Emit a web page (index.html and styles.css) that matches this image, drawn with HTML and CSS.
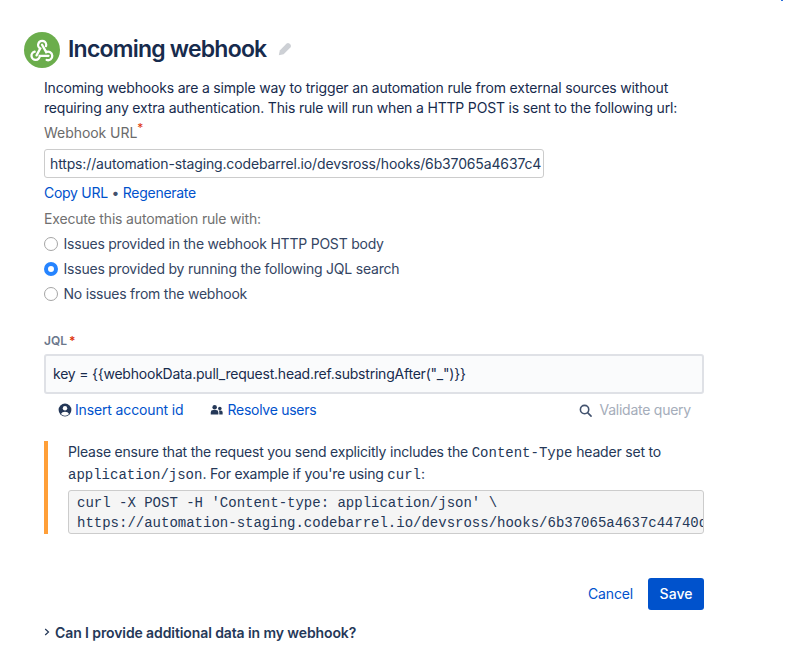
FILE: index.html
```html
<!DOCTYPE html>
<html lang="en">
<head>
<meta charset="utf-8">
<title>Incoming webhook</title>
<link rel="stylesheet" href="styles.css">
</head>
<body>
<span class="corner-mark"></span>
<main class="page">
  <header class="title-row">
    <span class="logo">
      <svg viewBox="0 0 36 36" width="36" height="36">
        <circle cx="18" cy="18" r="18" fill="#6bad4c"/>
        <g transform="translate(1.5 1.3) scale(.92)" fill="none" stroke="#fff" stroke-width="2.500" stroke-linecap="round">
          <path d="M12 24 16 16.500A4.400 4.400 0 1 1 22.300 14"/>
          <path d="M18 12.500 22.500 20.500A4.600 4.600 0 1 1 23 29"/>
          <path d="M25 24.500H15.500A4.500 4.500 0 1 1 10 20"/>
        </g>
      </svg>
    </span>
    <h1 class="title">Incoming webhook</h1>
    <svg class="pencil" viewBox="0 0 14 14" width="14" height="14">
      <path d="M.8 13.200 1.800 8.400 8.600 1.600a2 2 0 0 1 2.800 0l1 1a2 2 0 0 1 0 2.800L5.600 12.200z" fill="#cdd0d5"/>
    </svg>
  </header>
  <div class="content">
    <p class="intro">Incoming webhooks are a simple way to trigger an automation rule from external sources without requiring any extra authentication. This rule will run when a HTTP POST is sent to the following url:</p>
    <div class="label url-label">Webhook URL<sup class="req">*</sup></div>
    <div class="url-input">https://automation-staging.codebarrel.io/devsross/hooks/6b37065a4637c4</div>
    <div class="url-links"><a class="link">Copy URL</a> <span class="dot">•</span> <a class="link">Regenerate</a></div>
    <div class="label exec-label">Execute this automation rule with:</div>
    <ul class="radios">
      <li class="radio-row"><span class="radio"></span>Issues provided in the webhook HTTP POST body</li>
      <li class="radio-row"><span class="radio radio-on"></span>Issues provided by running the following JQL search</li>
      <li class="radio-row"><span class="radio"></span>No issues from the webhook</li>
    </ul>
    <div class="jql-label">JQL<span class="jql-req">*</span></div>
    <div class="jql-input">key = {{webhookData.pull_request.head.ref.substringAfter("_")}}</div>
    <div class="jql-tools">
      <a class="tool link">
        <svg viewBox="0 0 14 14" width="14" height="14"><circle cx="7" cy="7" r="6.400" fill="#253858"/><circle cx="7" cy="5.300" r="2.200" fill="#fff"/><path d="M2.900 11a4.400 3.400 0 0 1 8.200 0A5.600 5.600 0 0 1 2.900 11z" fill="#fff"/></svg>
        Insert account id
      </a>
      <a class="tool tool-users link">
        <svg viewBox="0 0 14 12" width="13" height="12"><circle cx="5" cy="3" r="2.400" fill="#253858"/><circle cx="10.600" cy="4.400" r="1.900" fill="#253858"/><path d="M.8 10.800V8.600A2.600 2.600 0 0 1 3.400 6h3a2.600 2.600 0 0 1 2.600 2.600v2.200zM10 10.800V8.400c0-.8-.2-1.400-.6-1.900h2.200a2 2 0 0 1 2 2v2.300z" fill="#253858"/></svg>
        Resolve users
      </a>
      <span class="tool validate">
        <svg viewBox="0 0 14 14" width="13" height="13" fill="none" stroke="#42526e" stroke-width="1.700" stroke-linecap="round"><circle cx="6" cy="6" r="4.500"/><path d="M9.500 9.500 13 13"/></svg>
        Validate query
      </span>
    </div>
    <section class="notice">
      <p class="notice-text">Please ensure that the request you send explicitly includes the <code>Content-Type</code> header set to <code>application/json</code>. For example if you're using <code>curl</code>:</p>
      <pre class="code">curl -X POST -H 'Content-type: application/json' \
https://automation-staging.codebarrel.io/devsross/hooks/6b37065a4637c44740d</pre>
    </section>
    <div class="actions">
      <a class="cancel">Cancel</a>
      <button class="save" type="button">Save</button>
    </div>
  </div>
  <div class="faq">
    <svg class="chev" viewBox="0 0 6 8" width="6" height="8" fill="none" stroke="#253858" stroke-width="1.200"><path d="M1.200 1 4.500 4 1.200 7"/></svg>
    <strong>Can I provide additional data in my webhook?</strong>
  </div>
</main>
</body>
</html>
```
FILE: styles.css
```css
* { box-sizing: border-box; }
html, body { margin: 0; padding: 0; background: #fff; }
body {
  font-family: Inter, "Liberation Sans", sans-serif;
  font-size: 14px;
  line-height: 20px;
  color: #172b4d;
  height: 665px;
  overflow: hidden;
  position: relative;
}
.corner-mark {
  position: absolute;
  left: 781px;
  top: 0;
  width: 2px;
  height: 1px;
  background: #2a6fdb;
}
.page { padding: 32px 0 0 24px; width: 704px; box-sizing: content-box; }
.title-row { display: flex; align-items: center; height: 36px; }
.logo { width: 36px; height: 36px; display: block; flex: none; }
.logo svg { display: block; }
.title {
  margin: -2px 0 0 8px;
  font-size: 23px;
  line-height: 34px;
  font-weight: 600;
  letter-spacing: -0.78px;
  color: #172b4d;
}
.pencil { margin-left: 12px; margin-top: -2px; }
.content { padding-left: 20px; width: 680px; }
.intro { margin: 10px 0 0; width: 650px; letter-spacing: -0.18px; }
.label { color: #6b778c; letter-spacing: -0.05px; }
.url-label { margin-top: 5px; color: #6b6b6b; }
.req { color: #de350b; font-size: 12px; line-height: 0; }
.url-input {
  margin-top: 6px;
  width: 500px;
  height: 29px;
  padding: 0 5px;
  line-height: 27px;
  border: 1px solid #ccc;
  border-radius: 3px;
  white-space: nowrap;
  letter-spacing: -0.14px;
  color: #253858;
}
.url-links { margin-top: 5px; letter-spacing: -0.28px; }
.link { color: #0052cc; }
.dot { color: #42526e; }
.exec-label { margin-top: 6px; color: #707070; letter-spacing: -0.17px; }
.radios { list-style: none; margin: 2px 0 0; padding: 0; }
.radio-row { display: flex; align-items: center; height: 25px; color: #344563; letter-spacing: -0.22px; }
.radio {
  width: 14px;
  height: 14px;
  margin-right: 5.500px;
  border: 1px solid #a5a5a5;
  border-radius: 50%;
  background: #fff;
  flex: none;
}
.radio-on {
  border: 4.500px solid #2684ff;
}
.jql-label {
  margin-top: 27px;
  font-size: 12px;
  line-height: 16px;
  font-weight: 600;
  color: #6b778c;
}
.jql-req { color: #de350b; margin-left: 2px; }
.jql-input {
  margin-top: 5px;
  width: 660px;
  height: 40px;
  padding: 0 7px;
  line-height: 36px;
  border: 2px solid #dfe1e6;
  border-radius: 3px;
  background: #fafbfc;
  letter-spacing: -0.22px;
}
.jql-tools { display: flex; align-items: center; height: 32px; width: 660px; padding: 0 13px 0 14px; }
.tool { display: flex; align-items: center; gap: 3px; letter-spacing: -0.14px; }
.tool + .tool { margin-left: 26px; }
.tool-users { gap: 5px; letter-spacing: -0.27px; }
.validate { margin-left: auto !important; color: #a5adba; gap: 7px; letter-spacing: -0.24px; }
.notice {
  margin-top: 15px;
  width: 660px;
  height: 93px;
  border-left: 4px solid #ff9f38;
  padding: 0 0 0 20px;
}
.notice-text { margin: 0; line-height: 22px; color: #253858; letter-spacing: -0.2px; }
.notice-text code {
  font-family: "Liberation Mono", monospace;
  font-size: 14px;
  line-height: 0;
  letter-spacing: 0;
}
.code {
  font-family: "Liberation Mono", monospace;
  margin: 5px 0 0;
  height: 44px;
  padding: 2px 0 0 8px;
  line-height: 20px;
  background: #f5f5f5;
  border: 1px solid #ccc;
  border-radius: 3px;
  overflow: hidden;
  color: #253858;
  font-size: 14px;
}
.actions { display: flex; justify-content: flex-end; align-items: center; margin-top: 44px; width: 660px; }
.cancel { color: #0052cc; margin-right: 15px; letter-spacing: -0.15px; }
.save {
  width: 56px;
  height: 32px;
  border: 0;
  border-radius: 3px;
  background: #0052cc;
  color: #fff;
  font: 500 14px/20px Inter, "Liberation Sans", sans-serif;
}
.faq { display: flex; align-items: center; margin-top: 13px; padding-left: 20px; height: 20px; }
.chev { margin-right: 5px; margin-top: -2px; }
.faq strong { font-weight: 600; letter-spacing: -0.1px; color: #253858; }
```
